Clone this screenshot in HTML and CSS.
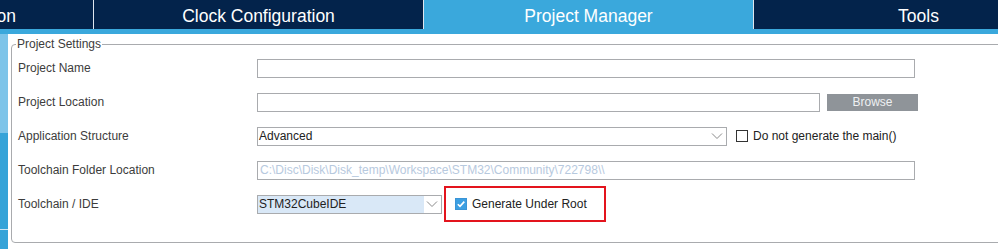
FILE: index.html
```html
<!doctype html>
<html lang="en">
<head>
    <meta charset="utf-8">
    <meta name="viewport" content="width=device-width, initial-scale=1">
    <title>Project Manager</title>
    <link rel="stylesheet" href="styles.css">
</head>
<body>

<!-- Верхние вкладки -->
<nav class="tabs">
    <div class="tab">Pinout &amp; Configuration</div>
    <div class="tab">Clock Configuration</div>
    <div class="tab tab-active">Project Manager</div>
    <div class="tab">Tools</div>
</nav>
<div class="tabs-line"></div>

<div class="main">
    <!-- Боковая полоса -->
    <aside class="side">
        <div class="side-top"></div>
        <div class="side-bottom"></div>
        <div class="side-last"></div>
    </aside>

    <div class="content">
        <fieldset class="settings">
            <legend class="settings-title">Project Settings</legend>

            <div class="row">
                <span class="row-label">Project Name</span>
                <input class="field field-wide" type="text">
            </div>

            <div class="row">
                <span class="row-label">Project Location</span>
                <input class="field field-location" type="text">
                <button class="browse" type="button">Browse</button>
            </div>

            <div class="row">
                <span class="row-label">Application Structure</span>
                <div class="select select-structure">
                    <span class="select-value">Advanced</span>
                    <svg class="select-arrow" width="12" height="8" viewBox="0 0 12 8"><path d="M1 1.5l5 5 5-5" fill="none" stroke="#8a8a8a" stroke-width="1"/></svg>
                </div>
                <label class="check">
                    <span class="check-box"></span>
                    <span>Do not generate the main()</span>
                </label>
            </div>

            <div class="row">
                <span class="row-label">Toolchain Folder Location</span>
                <input class="field field-wide field-disabled" type="text" value="C:\Disc\Disk\Disk_temp\Workspace\STM32\Community\722798\\" disabled>
            </div>

            <div class="row">
                <span class="row-label">Toolchain / IDE</span>
                <div class="select select-ide">
                    <span class="select-value select-selected">STM32CubeIDE</span>
                    <svg class="select-arrow" width="12" height="8" viewBox="0 0 12 8"><path d="M1 1.5l5 5 5-5" fill="none" stroke="#8a8a8a" stroke-width="1"/></svg>
                </div>
                <div class="highlight">
                    <label class="check">
                        <span class="check-box check-on">
                            <svg width="10" height="10" viewBox="0 0 10 10"><path d="M1.8 5.2l2.2 2.2 4.3-4.8" fill="none" stroke="#fff" stroke-width="1.6"/></svg>
                        </span>
                        <span>Generate Under Root</span>
                    </label>
                </div>
            </div>
        </fieldset>
    </div>
</div>

</body>
</html>
```

FILE: styles.css
```css
*, *::before, *::after {
    box-sizing: border-box;
}

:root {
    --navy: #03234b;
    --sky: #3aa8dc;
    --border: #a9abae;
    --text: #3c3c3c;
}

body {
    margin: 0;
    width: 998px;
    height: 249px;
    overflow: hidden;
    font-family: "Liberation Sans", Arial, sans-serif;
    font-size: 12px;
    color: var(--text);
    background: #fff;
}

/* Вкладки */
.tabs {
    display: flex;
    gap: 1px;
    height: 29px;
    margin-left: -236px;
    background: #dfe6ee;
}

.tab {
    flex: 0 0 329px;
    display: flex;
    align-items: center;
    justify-content: center;
    background: var(--navy);
    color: #fff;
    font-size: 17.5px;
    padding-top: 3px;
    white-space: nowrap;
}

.tab-active {
    background: var(--sky);
}

.tabs-line {
    height: 5px;
    background: var(--sky);
}

.main {
    display: flex;
    height: 215px;
}

/* Боковая полоса */
.side {
    flex: 0 0 8px;
    display: flex;
    flex-direction: column;
}

.side-top {
    height: 99px;
    background: #7dc4e9;
}

.side-bottom {
    height: 97px;
    background: #35a3d8;
    border-bottom: 1px solid #cfe6f4;
}

.side-last {
    flex: 1;
    background: #35a3d8;
}

.content {
    flex: 1;
    padding: 3px 0 0 3px;
}

/* Группа настроек */
.settings {
    margin: 0;
    width: 1100px;
    height: 206px;
    padding: 0 0 0 6px;
    border: 1px solid var(--border);
    border-radius: 4px;
}

.settings-title {
    padding: 0 1px;
    margin-left: -2px;
    line-height: 14px;
}

.row {
    display: flex;
    align-items: center;
    height: 34px;
}

.row-label {
    flex: 0 0 239px;
}

.field {
    height: 19px;
    margin: 0;
    padding: 0 2px;
    border: 1px solid var(--border);
    font: inherit;
    background: #fff;
}

.field-wide {
    width: 658px;
}

.field-location {
    width: 563px;
}

.field-disabled {
    color: #b7c9de;
}

.browse {
    width: 91px;
    height: 17px;
    margin-left: 7px;
    padding: 0;
    border: 0;
    background: #8f9499;
    color: #eef0f2;
    font: inherit;
}

/* Выпадающие списки */
.select {
    display: flex;
    align-items: center;
    height: 19px;
    border: 1px solid var(--border);
    background: #fff;
    color: #222;
}

.select-structure {
    width: 470px;
}

.select-ide {
    width: 185px;
}

.select-value {
    flex: 1;
    align-self: stretch;
    display: flex;
    align-items: center;
    padding-left: 1px;
}

.select-selected {
    background: #d9e8f7;
}

.select-arrow {
    margin: 0 3px 0 2px;
}

/* Чекбоксы */
.check {
    display: flex;
    align-items: center;
    gap: 5px;
    margin-left: 9px;
    color: #222;
}

.check-box {
    width: 12px;
    height: 12px;
    border: 1px solid #333;
    background: #fff;
    display: flex;
    align-items: center;
    justify-content: center;
}

.check-on {
    border-color: #3a94d6;
    background: #3c9fe2;
}

.highlight {
    display: flex;
    align-items: center;
    width: 162px;
    height: 36px;
    margin-left: 2px;
    border: 2px solid #e3141d;
}
```
